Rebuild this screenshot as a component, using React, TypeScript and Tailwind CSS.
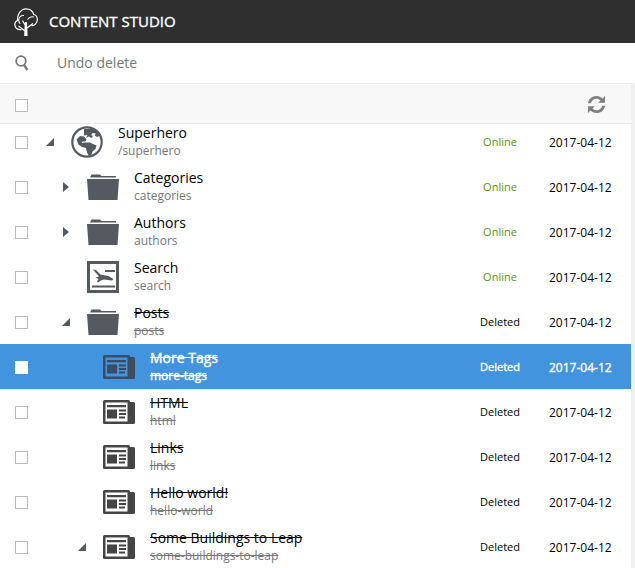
const Tree = () => (
  <svg width="24" height="28" viewBox="0 0 24 28" fill="none" className="shrink-0">
    <path d="M7.500 21.500C3.500 22.500 .8 19.500 .8 16.500c0-1.800 1-3.300 2.700-4C3 6.500 6.800 .8 12 .8c3.800 0 6.800 2.400 7.800 5.700 2.400.6 3.600 3 3.500 5.500-.2 3.300-2.700 5.800-5.800 5.500" stroke="#fff" strokeWidth="1.200" />
    <path d="M10 7.500c-3-.5-5.500 2-5.300 5 .1 1.300.6 2.400 1.500 3.200M13.500 11.500c1.300-2 4-3.200 6.300-2.500" stroke="#fff" strokeWidth="1.100" />
    <path d="M10.200 28l.6-14h2.200l.6 14z" fill="#fff" />
    <path d="M11 23L4.500 18M13 20l6-4.500M11 17L8.500 12.500" stroke="#fff" strokeWidth="1.200" />
  </svg>
);

const Checkbox = ({ filled }: { filled?: boolean }) => (
  <span className={`block w-[13px] h-[13px] mt-[2px] border ${filled ? "bg-white border-white" : "bg-white border-[#bbbbbb]"}`} />
);

const Globe = () => (
  <svg width="32" height="32" viewBox="0 0 32 32" className="shrink-0">
    <circle cx="16" cy="16" r="14.700" fill="#fff" stroke="#555a61" strokeWidth="2.200" />
    <path d="M13 3h9l5 3 1.500 4-2.500 1-2-1.500 .5-2-3-.5-1.500 2 2 1-1.500 2-3-1.500-2.500 1.500 1.500-3-3.500.5zM5.500 13.500L9 10l4 .5 2.500 2.500-1 2.500h-3l-1 1.500 3.500-.5h5l3 1.500 3.500 1.500-1 3.500-3 2.500-1 3-2.500 1.500-2-3.500-1-4.500-4-1-3.500-2.500z" fill="#555a61" />
  </svg>
);

const Folder = () => (
  <svg width="32" height="27" viewBox="0 0 32 27" className="shrink-0">
    <path d="M3 4.500L4.500 1.500h8.500l1.500 1.500h14.500v1.500zM0 6h32l-1.500 21h-29z" fill="#555a61" />
  </svg>
);

const SearchPage = () => (
  <svg width="32" height="32" viewBox="0 0 32 32" className="shrink-0">
    <path d="M0 0h32v32H0zM3 3v26h26V3z" fill="#555a61" fillRule="evenodd" />
    <path d="M18 9h10v2H18zM5 24.500h23v2H5zM6 8.500l3 .5 4.500 4.500 8 1.500 5 3-1.500 1.500-8-1-3 1-3 2-1-1 1.500-2.500-3-1.500 3.500-1z" fill="#555a61" />
  </svg>
);

const News = ({ color, inner }: { color: string; inner: string }) => (
  <svg width="32" height="24" viewBox="0 0 32 24" className="shrink-0">
    <rect x="24" y="2" width="8" height="22" rx="1.500" fill={color} />
    <rect x="0" y="0" width="27" height="24" rx="1.500" fill={color} />
    <rect x="2.500" y="2.500" width="22" height="19" fill={inner} />
    <path d="M4 5h19v2.200H4zM4 9.500h10v9H4zM16 9.500h7v2h-7zM16 13h7v2h-7zM16 16.500h6v2h-6z" fill={color} />
  </svg>
);

const Row = ({ indent, arrow, icon, title, sub, status, struck, selected, first }: { indent: number; arrow?: "open" | "closed"; icon: React.ReactNode; title: string; sub: string; status: string; struck?: boolean; selected?: boolean; first?: boolean }) => (
  <div className={`flex items-center h-[45px] pl-[15px] ${selected ? "bg-[#4294de]" : "bg-white"} ${first ? "-mt-[5px]" : ""}`}>
    <Checkbox filled={selected} />
    <div className="flex items-center" style={{ marginLeft: indent }}>
      <span className="w-[12px] flex justify-center shrink-0 mr-[15px]">
        {arrow === "closed" && (
          <svg width="6" height="10" viewBox="0 0 6 10"><path d="M0 0l6 5-6 5z" fill="#555a61" /></svg>
        )}
        {arrow === "open" && (
          <svg width="8" height="8" viewBox="0 0 8 8"><path d="M8 0v8H0z" fill="#555a61" /></svg>
        )}
      </span>
      <span className="w-[32px] flex justify-center">{icon}</span>
      <div className="ml-[15px] w-[300px]">
        <div className={`text-[14px] leading-[18px] ${selected ? "text-white [-webkit-text-stroke:0.35px_white]" : "text-black"} ${struck ? "line-through" : ""}`}>{title}</div>
        <div className={`text-[12px] leading-[17px] ${selected ? "text-white [-webkit-text-stroke:0.35px_white]" : "text-[#777777]"} ${struck ? "line-through" : ""}`}>{sub}</div>
      </div>
    </div>
    <div className="ml-auto flex items-center mt-[2px]">
      <span className={`text-[11px] w-[60px] text-center ${status === "Online" ? "text-[#5a9216]" : selected ? "text-white [-webkit-text-stroke:0.35px_white]" : "text-black"}`}>{status}</span>
      <span className={`text-[12px] w-[63px] ml-[19px] mr-[19px] ${selected ? "text-white [-webkit-text-stroke:0.35px_white]" : "text-black"}`}>2017-04-12</span>
    </div>
  </div>
);

export default function App() {
  const dark = "#454545";
  return (
    <div className="w-[635px] h-[568px] overflow-hidden flex flex-col bg-white font-['Open_Sans',sans-serif]">
      <header className="relative z-10 h-[43px] bg-[#2f2f2f] flex items-center pl-[14px] shrink-0">
        <Tree />
        <span className="ml-[11px] text-white text-[15px] [-webkit-text-stroke:0.35px_white] -mt-[1px]">CONTENT STUDIO</span>
      </header>
      <div className="relative z-10 h-[40px] bg-white flex items-center pl-[15px] shrink-0">
        <svg width="14" height="16" viewBox="0 0 14 16" fill="none">
          <circle cx="6" cy="6" r="4.800" stroke="#777" strokeWidth="1.800" />
          <path d="M9 10l3.500 5" stroke="#777" strokeWidth="2.200" />
        </svg>
        <span className="ml-[28px] text-[14px] text-[#777777] -mt-[2px]">Undo delete</span>
      </div>
      <div className="relative z-10 h-[41px] bg-[#f8f8f8] border-y border-[#ebebeb] border-r-4 border-r-[#f0f0f0] flex items-center pl-[15px] pr-[26px] pt-[1px] justify-between shrink-0">
        <Checkbox />
        <svg width="17" height="17" viewBox="1.500 1.500 15 15" fill="#808080" className="mt-[1px]">
          <path d="M1.500 8C2 4 5 1.500 9 1.500c2.300 0 4 .9 5.300 2.200L16.500 1.500v6h-6l2-2C11.500 4.500 10.400 4 9 4 6.500 4 4.800 5.500 4 8zM16.500 10c-.5 4-3.500 6.500-7.500 6.500-2.300 0-4-.9-5.300-2.200L1.500 16.500v-6h6l-2 2c1 1 2.100 1.500 3.500 1.500 2.500 0 4.200-1.500 5-4z" />
        </svg>
      </div>
      <div className="border-r-4 border-[#f0f0f0] flex-1">
        <Row first indent={16} arrow="open" icon={<Globe />} title="Superhero" sub="/superhero" status="Online" />
        <Row indent={32} arrow="closed" icon={<Folder />} title="Categories" sub="categories" status="Online" />
        <Row indent={32} arrow="closed" icon={<Folder />} title="Authors" sub="authors" status="Online" />
        <Row indent={32} icon={<SearchPage />} title="Search" sub="search" status="Online" />
        <Row indent={32} arrow="open" icon={<Folder />} title="Posts" sub="posts" status="Deleted" struck />
        <Row selected indent={48} icon={<News color="#3f4a5c" inner="#4294de" />} title="More Tags" sub="more-tags" status="Deleted" struck />
        <Row indent={48} icon={<News color={dark} inner="#fff" />} title="HTML" sub="html" status="Deleted" struck />
        <Row indent={48} icon={<News color={dark} inner="#fff" />} title="Links" sub="links" status="Deleted" struck />
        <Row indent={48} icon={<News color={dark} inner="#fff" />} title="Hello world!" sub="hello-world" status="Deleted" struck />
        <Row indent={48} arrow="open" icon={<News color={dark} inner="#fff" />} title="Some Buildings to Leap" sub="some-buildings-to-leap" status="Deleted" struck />
      </div>
    </div>
  );
}
